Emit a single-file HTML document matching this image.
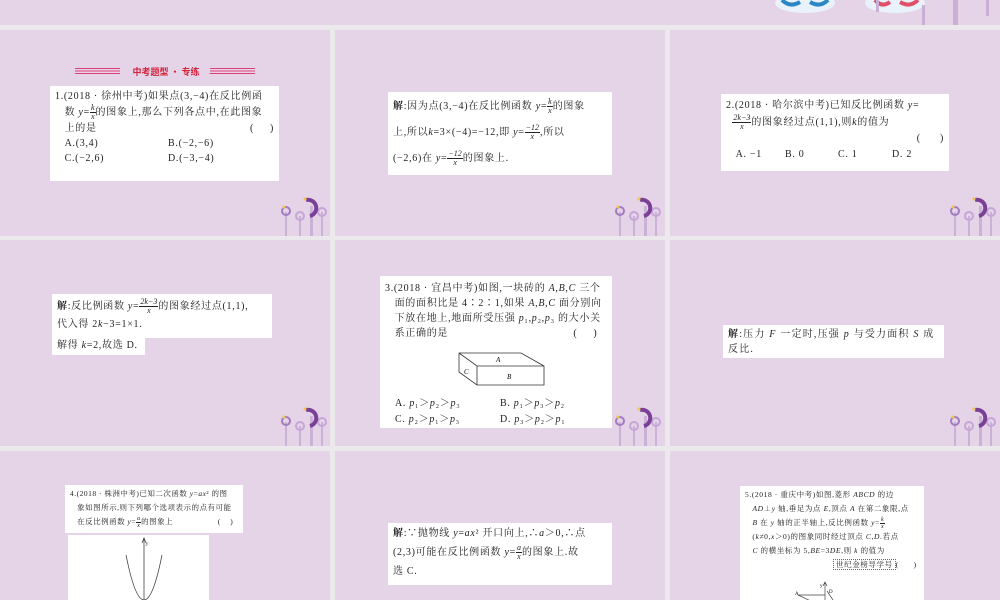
<!DOCTYPE html>
<html><head><meta charset="utf-8"><style>
*{margin:0;padding:0;box-sizing:border-box}
body{width:1000px;height:600px;background:#ebe9eb;position:relative;overflow:hidden;font-family:"Liberation Serif","Noto Serif CJK SC",serif;color:#222}
.s{position:absolute;background:#e5d3e7}
.b{position:absolute;background:#fff;font-size:10px;letter-spacing:0.7px;line-height:17px;padding:3px 5px;white-space:nowrap;overflow:hidden}
.fr{display:inline-block;vertical-align:middle;text-align:center;line-height:8px;font-size:8px;font-style:italic;letter-spacing:0}
.fr span{display:block;border-bottom:0.8px solid #222;padding:0 1px}
i{font-style:italic}
.dec{position:absolute;width:55px;height:42px}
</style></head><body>
<div class="s" style="left:0;top:0;width:1000px;height:25px"></div>
<svg style="position:absolute;left:770px;top:0" width="230" height="25">
<ellipse cx="35" cy="3" rx="30" ry="10" fill="#e9f2fa"/><path d="M12 0 Q20 8 30 2 M40 2 Q50 8 58 0" stroke="#2a86c4" stroke-width="4" fill="none"/>
<ellipse cx="125" cy="3" rx="30" ry="10" fill="#e9f2fa"/><path d="M105 0 Q112 8 120 2 M130 2 Q140 8 148 0" stroke="#e0506a" stroke-width="4" fill="none"/>
<rect x="106" y="0" width="3" height="12" fill="#c7b0d3"/><rect x="152" y="5" width="3" height="20" fill="#c7b0d3"/><rect x="183" y="0" width="5" height="25" fill="#c7b0d3"/><rect x="216" y="0" width="3" height="16" fill="#c7b0d3"/>
</svg>
<div class="s" style="left:0;top:30px;width:330px;height:206px"></div>
<div class="s" style="left:335px;top:30px;width:330px;height:206px"></div>
<div class="s" style="left:670px;top:30px;width:330px;height:206px"></div>
<div class="s" style="left:0;top:240px;width:330px;height:206px"></div>
<div class="s" style="left:335px;top:240px;width:330px;height:206px"></div>
<div class="s" style="left:670px;top:240px;width:330px;height:206px"></div>
<div class="s" style="left:0;top:451px;width:330px;height:149px"></div>
<div class="s" style="left:335px;top:451px;width:330px;height:149px"></div>
<div class="s" style="left:670px;top:451px;width:330px;height:149px"></div>

<svg width="0" height="0" style="position:absolute"><defs><g id="fl">
<rect x="9" y="18" width="2" height="24" fill="#c9b2d6"/><rect x="23" y="22" width="2" height="20" fill="#c9b2d6"/><rect x="34" y="12" width="3" height="30" fill="#c9b2d6"/><rect x="45" y="18" width="2" height="24" fill="#c9b2d6"/>
<circle cx="10" cy="17" r="4" fill="none" stroke="#a27cc0" stroke-width="2"/><circle cx="24" cy="22" r="4" fill="none" stroke="#c6a6d8" stroke-width="2"/><circle cx="46" cy="18" r="4" fill="none" stroke="#c6a6d8" stroke-width="2"/>
<path d="M30 6 A8 8 0 1 1 34 22" fill="none" stroke="#7a3f96" stroke-width="4"/><circle cx="29" cy="5" r="1.5" fill="#f2c64c"/><circle cx="8" cy="13" r="1.5" fill="#f2c64c"/>
</g></defs></svg>
<svg class="dec" style="left:276px;top:194px"><use href="#fl"/></svg>
<svg class="dec" style="left:610px;top:194px"><use href="#fl"/></svg>
<svg class="dec" style="left:945px;top:194px"><use href="#fl"/></svg>
<svg class="dec" style="left:276px;top:404px"><use href="#fl"/></svg>
<svg class="dec" style="left:610px;top:404px"><use href="#fl"/></svg>
<svg class="dec" style="left:945px;top:404px"><use href="#fl"/></svg>

<div style="position:absolute;left:75px;top:66px;width:180px;height:12px">
<div style="position:absolute;left:0;top:2px;width:45px;height:7px;background:repeating-linear-gradient(#e0407a 0 1px,transparent 1px 2.5px)"></div>
<div style="position:absolute;left:135px;top:2px;width:45px;height:7px;background:repeating-linear-gradient(#e0407a 0 1px,transparent 1px 2.5px)"></div>
<div style="position:absolute;left:48px;top:-1px;width:86px;text-align:center;font:bold 9px 'Noto Sans CJK SC',sans-serif;color:#d4213a">中考题型 · 专练</div>
</div>
<div class="b" style="left:50px;top:86px;width:229px;height:95px;line-height:15px">1.(2018 · 徐州中考)如果点(3,−4)在反比例函<br>&nbsp;&nbsp;&nbsp;数 <i>y</i>=<span class="fr"><span>k</span>x</span>的图象上,那么下列各点中,在此图象<br>&nbsp;&nbsp;&nbsp;上的是<span style="float:right">(&nbsp;&nbsp;&nbsp;&nbsp;&nbsp;)</span><br>&nbsp;&nbsp;&nbsp;A.(3,4)<span style="position:absolute;left:118px">B.(−2,−6)</span><br>&nbsp;&nbsp;&nbsp;C.(−2,6)<span style="position:absolute;left:118px">D.(−3,−4)</span></div>

<div class="b" style="left:388px;top:92px;width:224px;height:83px;line-height:26px;padding-top:2px"><b>解</b>:因为点(3,−4)在反比例函数 <i>y</i>=<span class="fr"><span>k</span>x</span>的图象<br>上,所以<i>k</i>=3×(−4)=−12,即 <i>y</i>=<span class="fr"><span>−12</span>x</span>,所以<br>(−2,6)在 <i>y</i>=<span class="fr"><span>−12</span>x</span>的图象上.</div>

<div class="b" style="left:721px;top:94px;width:228px;height:77px;line-height:16px;padding-top:4px">2.(2018 · 哈尔滨中考)已知反比例函数 <i>y</i>=<br>&nbsp;&nbsp;<span class="fr"><span>2k−3</span>x</span>的图象经过点(1,1),则<i>k</i>的值为<br><span style="float:right">(&nbsp;&nbsp;&nbsp;&nbsp;&nbsp;&nbsp;)</span><br>&nbsp;&nbsp;&nbsp;A. −1<span style="position:absolute;left:64px">B. 0</span><span style="position:absolute;left:117px">C. 1</span><span style="position:absolute;left:171px">D. 2</span></div>

<div class="b" style="left:52px;top:294px;width:220px;height:44px;line-height:18px;padding-top:4px"><b>解</b>:反比例函数 <i>y</i>=<span class="fr"><span>2k−3</span>x</span>的图象经过点(1,1),<br>代入得 2<i>k</i>−3=1×1.</div>
<div class="b" style="left:52px;top:337px;width:93px;height:18px;line-height:16px;padding-top:1px">解得 <i>k</i>=2,故选 D.</div>

<div class="b" style="left:380px;top:276px;width:232px;height:152px;line-height:15px;padding-top:5px">3.(2018 · 宜昌中考)如图,一块砖的 <i>A</i>,<i>B</i>,<i>C</i> 三个<br>&nbsp;&nbsp;&nbsp;面的面积比是 4∶2∶1,如果 <i>A</i>,<i>B</i>,<i>C</i> 面分别向<br>&nbsp;&nbsp;&nbsp;下放在地上,地面所受压强 <i>p</i>₁,<i>p</i>₂,<i>p</i>₃ 的大小关<br>&nbsp;&nbsp;&nbsp;系正确的是<span style="float:right">(&nbsp;&nbsp;&nbsp;&nbsp;&nbsp;)&nbsp;&nbsp;&nbsp;</span>
<svg style="position:absolute;left:78px;top:76px" width="90" height="34"><path d="M1 1 L63 1 L86 14 L86 33 L19 33 L1 20 Z M1 1 L19 14 L86 14 M19 14 L19 33" fill="none" stroke="#333" stroke-width="0.8"/><text x="38" y="10" font-size="7" font-style="italic">A</text><text x="49" y="27" font-size="7" font-style="italic">B</text><text x="6" y="22" font-size="7" font-style="italic">C</text></svg>
<div style="position:absolute;top:120px;left:15px">A. <i>p</i>₁＞<i>p</i>₂＞<i>p</i>₃</div><div style="position:absolute;top:120px;left:120px">B. <i>p</i>₁＞<i>p</i>₃＞<i>p</i>₂</div>
<div style="position:absolute;top:136px;left:15px">C. <i>p</i>₂＞<i>p</i>₁＞<i>p</i>₃</div><div style="position:absolute;top:136px;left:120px">D. <i>p</i>₃＞<i>p</i>₂＞<i>p</i>₁</div></div>

<div class="b" style="left:723px;top:325px;width:221px;height:33px;line-height:15px;padding-top:2px;white-space:normal;letter-spacing:1.2px"><b>解</b>:压力 <i>F</i> 一定时,压强 <i>p</i> 与受力面积 <i>S</i> 成反比.</div>

<div class="b" style="left:65px;top:485px;width:178px;height:48px;font-size:7.5px;letter-spacing:0.5px;line-height:14px;padding-top:2px">4.(2018 · 株洲中考)已知二次函数 <i>y</i>=<i>ax</i>² 的图<br>&nbsp;&nbsp;&nbsp;象如图所示,则下列哪个选项表示的点有可能<br>&nbsp;&nbsp;&nbsp;在反比例函数 <i>y</i>=<span class="fr" style="font-size:6px;line-height:6px"><span>a</span>x</span>的图象上<span style="float:right">(&nbsp;&nbsp;&nbsp;&nbsp;)&nbsp;&nbsp;</span></div>
<div class="b" style="left:68px;top:535px;width:141px;height:65px;padding:0"><svg width="141" height="65"><path d="M76 65 L76 4 M74 8 L76 3 L78 8" stroke="#444" stroke-width="0.8" fill="none"/><text x="78" y="10" font-size="5" font-style="italic">y</text><path d="M58 20 Q76 110 94 20" stroke="#444" stroke-width="0.8" fill="none"/></svg></div>

<div class="b" style="left:388px;top:523px;width:224px;height:62px;line-height:19px;padding-top:1px"><b>解</b>:∵抛物线 <i>y</i>=<i>ax</i>² 开口向上,∴<i>a</i>＞0,∴点<br>(2,3)可能在反比例函数 <i>y</i>=<span class="fr"><span>a</span>x</span>的图象上.故<br>选 C.</div>

<div class="b" style="left:740px;top:486px;width:184px;height:114px;font-size:7.5px;letter-spacing:0.6px;line-height:14px;padding-top:2px">5.(2018 · 重庆中考)如图,菱形 <i>ABCD</i> 的边<br>&nbsp;&nbsp;&nbsp;<i>AD</i>⊥<i>y</i> 轴,垂足为点 <i>E</i>,顶点 <i>A</i> 在第二象限,点<br>&nbsp;&nbsp;&nbsp;<i>B</i> 在 <i>y</i> 轴的正半轴上,反比例函数 <i>y</i>=<span class="fr" style="font-size:6px;line-height:6px"><span>k</span>x</span><br>&nbsp;&nbsp;&nbsp;(<i>k</i>≠0,<i>x</i>＞0)的图象同时经过顶点 <i>C</i>,<i>D</i>.若点<br>&nbsp;&nbsp;&nbsp;<i>C</i> 的横坐标为 5,<i>BE</i>=3<i>DE</i>,则 <i>k</i> 的值为<br><span style="margin-left:88px;border:0.8px dotted #666;padding:0 2px">世纪金榜导学号</span>(&nbsp;&nbsp;&nbsp;&nbsp;&nbsp;&nbsp;)
<svg style="position:absolute;left:55px;top:95px" width="60" height="20"><path d="M30 20 L30 2 M28 5 L30 1 L32 5 M3 14 L30 14 M3 14 L20 22 M32 10 L40 22" stroke="#444" stroke-width="0.7" fill="none"/><text x="25" y="6" font-size="5">y</text><text x="0" y="14" font-size="5">A</text><text x="34" y="12" font-size="5">D</text></svg></div>
</body></html>
